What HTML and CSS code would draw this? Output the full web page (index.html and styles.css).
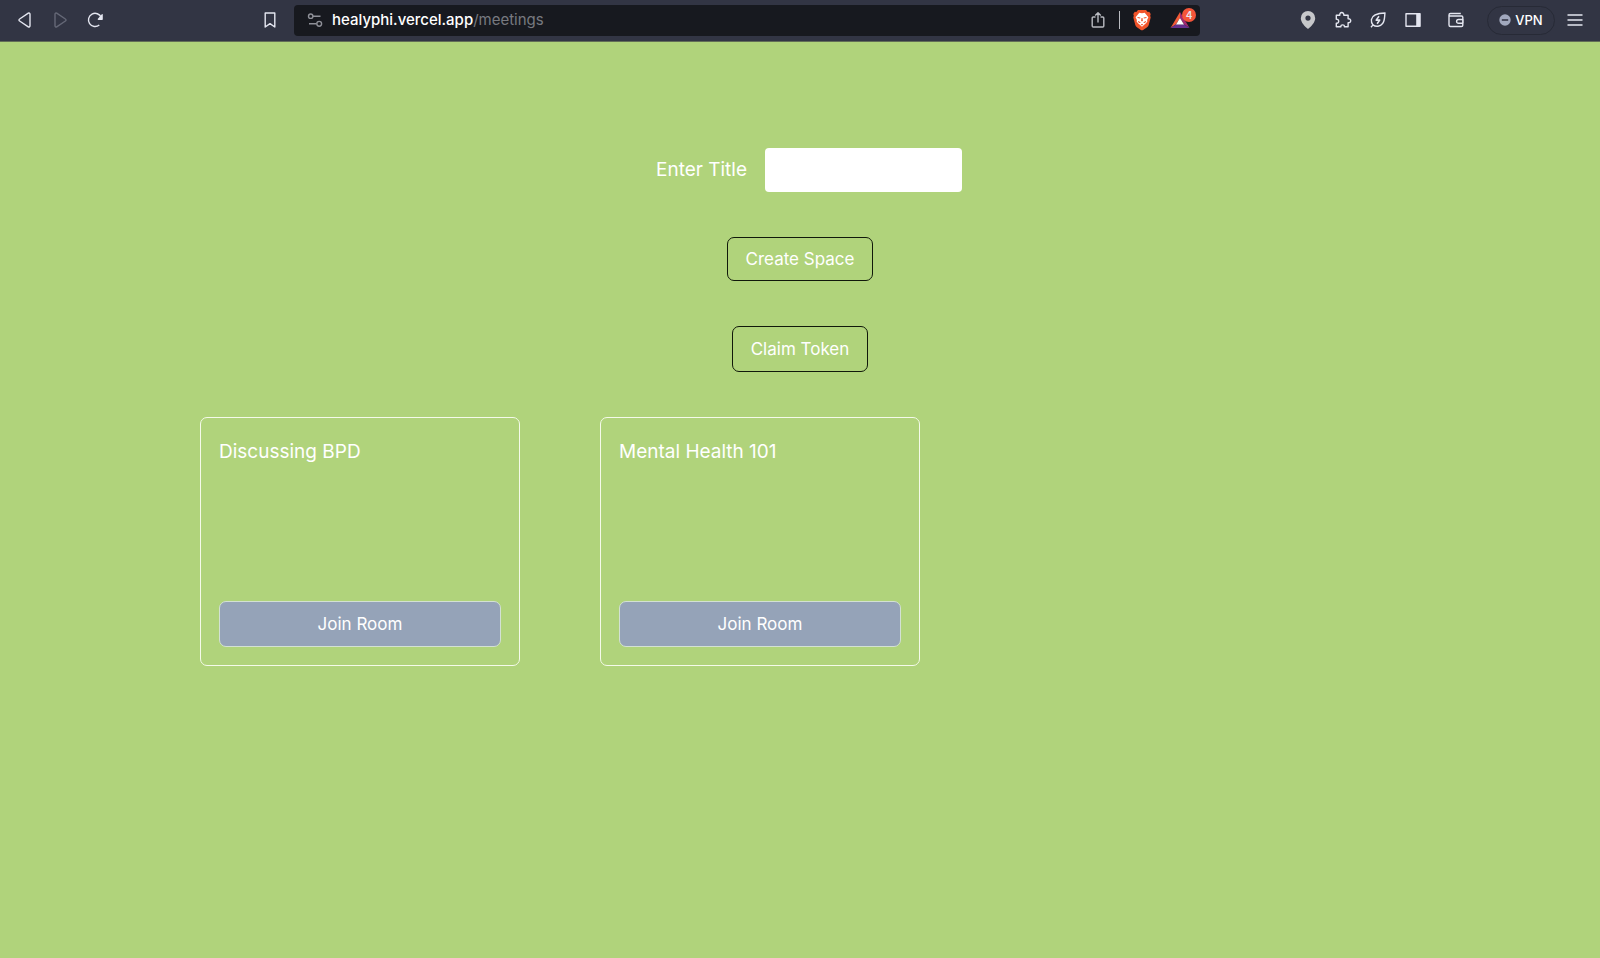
FILE: index.html
```html
<!DOCTYPE html>
<html lang="en">
<head>
<meta charset="utf-8">
<title>Healyphi – Meetings</title>
<link rel="stylesheet" href="styles.css">
</head>
<body>
<header class="toolbar">
  <nav class="nav-group" aria-label="Navigation">
    <button class="tool" aria-label="Back"><svg width="18" height="18" viewBox="0 0 18 18"><path d="M14 3.2v11.6c0 1-.9 1.5-1.7 1L3.6 10c-.8-.5-.8-1.500 0-2l8.700-5.800c.8-.5 1.700 0 1.700 1Z"/></svg></button>
    <button class="tool tool-off" aria-label="Forward" disabled><svg width="18" height="18" viewBox="0 0 18 18"><path d="M4 3.200v11.600c0 1 .9 1.500 1.700 1L14.400 10c.8-.5.8-1.500 0-2L5.700 2.200C4.900 1.700 4 2.200 4 3.200Z"/></svg></button>
    <button class="tool" aria-label="Reload"><svg width="18" height="18" viewBox="0 0 18 18"><path d="M13.300 14A6.600 6.600 0 1 1 15.200 6.500"/><path class="solid" d="M16.800 3.600v4.600c0 .4-.3.700-.7.700h-3.700c-.7 0-.9-.7-.5-1.100l3.900-4.600c.4-.4 1-.2 1 .4Z"/></svg></button>
    <button class="tool tool-end" aria-label="Bookmark"><svg width="18" height="18" viewBox="0 0 18 18"><path d="M4.200 2h9.600v14L9 12.600 4.200 16V2Z"/></svg></button>
  </nav>
  <div class="address">
    <button class="tool tool-site" aria-label="Site settings"><svg width="18" height="18" viewBox="0 0 18 18"><circle cx="4.700" cy="5.200" r="2.200"/><path d="M7 5.200h7.500M3 12.800h7.500"/><circle cx="13.200" cy="12.800" r="2.400"/></svg></button>
    <a class="url" href="#">healyphi.vercel.app<span class="path">/meetings</span></a>
    <button class="tool tool-share" aria-label="Share"><svg width="18" height="18" viewBox="0 0 18 18"><path d="M6.500 6H4.200c-.6 0-1 .4-1 1v8c0 .6.4 1 1 1h9.600c.6 0 1-.4 1-1V7c0-.6-.4-1-1-1h-2.300M9 11.500V1.800M6.200 4.500 9 1.700l2.800 2.800"/></svg></button>
    <span class="divider"></span>
    <button class="tool tool-shield" aria-label="Shields"><svg class="plain" width="20" height="22" viewBox="0 0 20 22"><path fill="#f2542a" d="M6 1h8l1.700 2 1.500-.2 1.500 2.300-.5 1.700.5 1.600-2 7.500c-.3 1-.8 1.700-1.600 2.300l-4 2.700c-.7.500-1.500.5-2.200 0l-4-2.700c-.8-.6-1.300-1.300-1.600-2.300l-2-7.500.5-1.600-.5-1.700 1.500-2.300 1.500.2L6 1Z"/><path fill="#fff" d="m10 4.200 2.700-.5 3.700 4.500-1.100 2.300c-.3.600-.2 1.300.1 1.800-.5 1.200-1.300 2.100-2.600 2.900L10 17.700l-2.800-2.500c-1.300-.8-2.100-1.700-2.600-2.900.3-.5.4-1.200.1-1.800L3.600 8.200l3.700-4.500 2.700.5Z"/><path fill="#f2542a" d="m5.500 7.900 2.900.6-.3 1-2.600-.6v-1Zm9 0-2.900.6.300 1 2.600-.6v-1ZM9.500 9h1l.4 2.700-.9.800-.9-.8.400-2.700Zm-3.200 2.900 2.600 1.500-1.700.7-1.300-1.300.4-.9Zm7.400 0-2.600 1.500 1.700.7 1.300-1.300-.4-.9ZM10 14.700l1.200.7-1.200 1-1.200-1 1.200-.7Z"/></svg></button>
    <button class="tool tool-rewards" aria-label="Rewards, 4 notifications"><svg class="plain" width="20" height="18" viewBox="0 0 20 18"><path fill="#f15a37" d="M10 1v6L6 13.300.5 17 10 1Z"/><path fill="#a32970" d="m10 1 9.500 16-5.500-3.700L10 7V1Z"/><path fill="#66308d" d="M.5 17 6 13.300h8l5.500 3.700H.5Z"/><path fill="#fff" d="m10 7 4 6.400H6L10 7Z"/></svg><span class="badge">4</span></button>
  </div>
  <div class="extras">
    <button class="tool" aria-label="Location"><svg class="plain" width="18" height="20" viewBox="0 0 18 20"><path fill="#c6c7ca" fill-rule="evenodd" d="M9 1a7.200 7.200 0 0 1 7.200 7.200C16.200 12.400 12 16.600 9 19 6 16.600 1.800 12.400 1.800 8.200A7.200 7.200 0 0 1 9 1Zm0 4.500A2.600 2.600 0 1 0 9 10.700 2.600 2.600 0 0 0 9 5.500Z"/></svg></button>
    <button class="tool" aria-label="Extensions"><svg width="18" height="18" viewBox="0 0 18 18"><path d="M2.300 4.300h3.500c-.7-3.700 4.600-3.700 4-.1h4.300v3.600c3.500-.5 3.500 4.300 0 4v4h-3.700c.4-2.600-3.900-2.600-3.500 0H2.300v-3.600c3.200.5 3.200-4.500 0-4V4.300Z"/></svg></button>
    <button class="tool" aria-label="Energy saver"><svg width="18" height="18" viewBox="0 0 18 18"><path d="M16 2C9.500 2.200 3.200 3 2.400 8.600c-.2 2 .3 4 1.600 5.300 2.900 2.300 7.300 1.600 9.600-1.400C16 9.700 15.400 5.600 16 2ZM4 13.900 2 16.300"/><path d="M10 5.200 7.200 9.100h3.500l-2.600 3.600" stroke-width="1.600"/></svg></button>
    <button class="tool" aria-label="Side panel"><svg width="18" height="18" viewBox="0 0 18 18"><path d="M2 2.700h14v12.600H2z"/><path class="solid" d="M12.200 2.500h4v13h-4z"/></svg></button>
    <button class="tool tool-wallet" aria-label="Wallet"><svg width="18" height="18" viewBox="0 0 18 18"><path d="M3.500 5h11c.8 0 1.300.5 1.300 1.300v7.900c0 .8-.5 1.300-1.300 1.300h-11c-1 0-1.500-.6-1.500-1.500V4c0-.9.6-1.500 1.500-1.500h10.300M2 4c.3.800.9 1 1.500 1M16 8.500h-4.500a1.800 1.800 0 0 0 0 3.800H16V8.500Z"/></svg></button>
    <button class="vpn"><svg class="plain" width="12" height="12" viewBox="0 0 12 12"><circle cx="6" cy="6" r="5.700" fill="#a1a8bd"/><path fill="#343746" d="M2.800 5.200h6.400v1.600H2.800z"/></svg>VPN</button>
    <button class="tool" aria-label="Menu"><svg width="18" height="18" viewBox="0 0 18 18"><path d="M1.500 4h15M1.500 9h15M1.500 14h15"/></svg></button>
  </div>
</header>
<main class="page">
  <form class="title-form">
    <div class="field">
      <label class="field-label" for="title">Enter Title</label>
      <input class="field-input" id="title" type="text">
    </div>
    <button class="action" type="button">Create Space</button>
    <button class="action action-claim" type="button">Claim Token</button>
  </form>
  <section class="rooms">
    <article class="room">
      <h2 class="room-title">Discussing BPD</h2>
      <button class="join">Join Room</button>
    </article>
    <article class="room">
      <h2 class="room-title">Mental Health 101</h2>
      <button class="join">Join Room</button>
    </article>
  </section>
</main>
</body>
</html>
```
FILE: styles.css
```css
* { box-sizing: border-box; }

body {
  margin: 0;
  min-height: 100vh;
  background: #b0d37b;
  color: #fff;
  font-family: Inter, "Liberation Sans", sans-serif;
}

button {
  margin: 0;
  padding: 0;
  border: 0;
  background: none;
  color: inherit;
  font-family: inherit;
}

/* Browser toolbar */
.toolbar {
  display: flex;
  align-items: center;
  height: 42px;
  padding-bottom: 1px;
  background: #323544;
  border-bottom: 1px solid #626e57;
}

.nav-group {
  display: flex;
  width: 294px;
  padding: 0 7px;
}

.tool {
  display: flex;
  flex: none;
  align-items: center;
  justify-content: center;
  width: 35px;
  height: 30px;
  color: #e4e6f0;
}

.tool svg {
  fill: none;
  stroke: currentColor;
  stroke-width: 1.4;
  stroke-linejoin: round;
}

.tool .plain { stroke: none; }
.tool .solid { fill: currentColor; stroke: none; }
.tool-off { color: #656877; }
.tool-end { margin-left: auto; }

.address {
  display: flex;
  flex: 1;
  align-items: center;
  height: 31px;
  padding-left: 3px;
  border-radius: 4px;
  background: #17191f;
}

.tool-site { color: #8e9098; }

.url {
  flex: 1;
  color: #fff;
  font-size: 15px;
  font-weight: 500;
  line-height: 20px;
  text-decoration: none;
}

.path {
  color: #777980;
  font-weight: 400;
}

.tool-share { color: #b9bbc1; }

.divider {
  width: 1px;
  height: 18px;
  margin: 0 4px;
  background: #b9bbc1;
}

.tool-rewards {
  position: relative;
  margin: 0 3px;
}

.badge {
  position: absolute;
  top: 3px;
  right: 1px;
  width: 14px;
  height: 14px;
  border-radius: 7px;
  background: #f4553a;
  font-size: 10px;
  font-weight: 600;
  line-height: 14px;
  text-align: center;
}

.extras {
  display: flex;
  align-items: center;
  justify-content: flex-end;
  width: 400px;
  padding-right: 8px;
}

.tool-wallet { margin: 0 14px 0 8px; }

.vpn {
  display: flex;
  align-items: center;
  justify-content: center;
  gap: 4px;
  width: 68px;
  height: 29px;
  margin-right: 2px;
  border: 1px solid #272a36;
  border-radius: 15px;
  font-size: 13px;
  font-weight: 500;
}

/* Meetings page */
.page { padding: 106px 0 48px; }

.title-form {
  display: flex;
  flex-direction: column;
  align-items: center;
}

.field {
  display: flex;
  align-items: center;
  gap: 18px;
  margin-left: 18px;
}

.field-label {
  font-size: 19px;
  line-height: 28px;
}

.field-input {
  width: 197px;
  height: 44px;
  padding: 0 12px;
  border: 0;
  border-radius: 4px;
  background: #fff;
  color: #222;
  font-family: inherit;
  font-size: 17px;
}

.action {
  margin-top: 45px;
  padding: 9px 18px;
  border: 1px solid #10180a;
  border-radius: 7px;
  font-size: 17px;
  line-height: 24px;
}

.action-claim { padding: 10px 18px; }

.rooms {
  display: grid;
  grid-template-columns: repeat(3, 1fr);
  margin: 45px 12.5% 0;
}

.room {
  display: flex;
  flex-direction: column;
  justify-content: space-between;
  width: 80%;
  min-height: 249px;
  padding: 18px;
  border: 1px solid #f4fae9;
  border-radius: 7px;
}

.room-title {
  margin: 0;
  font-size: 19px;
  font-weight: 400;
  line-height: 32px;
}

.join {
  padding: 10px 18px;
  border: 1px solid #d3e1d3;
  border-radius: 7px;
  background: #95a3b8;
  font-size: 17px;
  line-height: 24px;
}
```
